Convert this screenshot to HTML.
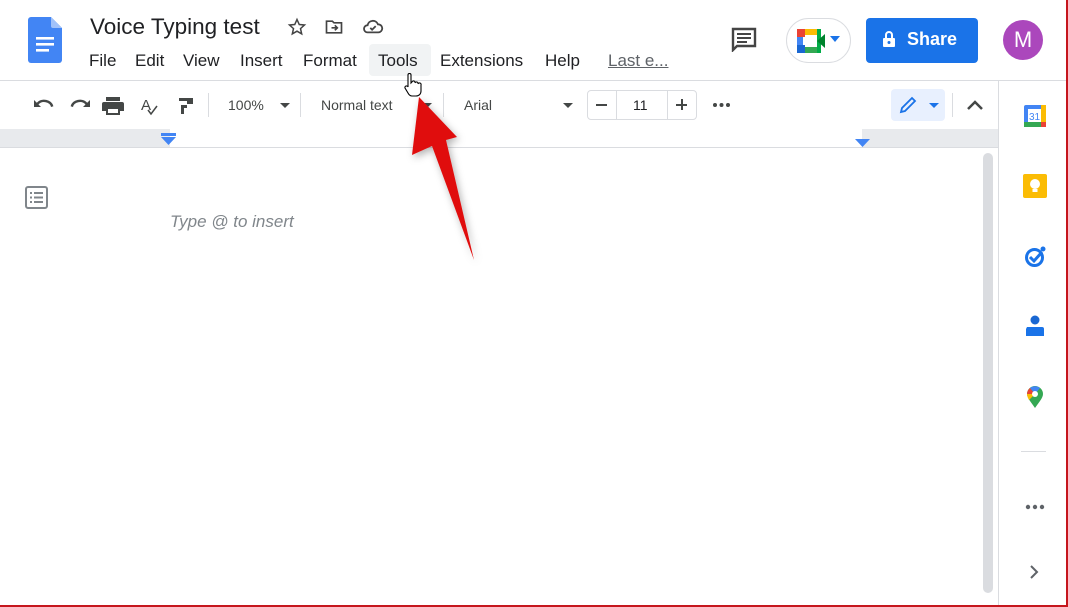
<!DOCTYPE html>
<html><head><meta charset="utf-8"><style>
*{margin:0;padding:0;box-sizing:border-box}
body{width:1068px;height:607px;position:relative;overflow:hidden;background:#fff;font-family:"Liberation Sans",Arial,sans-serif;color:#202124}
.a{position:absolute}
.menu span{position:absolute;top:51px;font-size:17px;color:#202124}
.tb{color:#444746;font-size:14px}
</style></head><body>
<svg class="a" style="left:28px;top:17px" width="34" height="46" viewBox="0 0 34 46"><path d="M3 0h20l11 11v32a3 3 0 0 1-3 3H3a3 3 0 0 1-3-3V3a3 3 0 0 1 3-3z" fill="#4285f4"/><path d="M23 0l11 11H25a2 2 0 0 1-2-2z" fill="#a1c2fa"/><rect x="8" y="20" width="18" height="2.6" fill="#fff"/><rect x="8" y="26" width="18" height="2.6" fill="#fff"/><rect x="8" y="32" width="13" height="2.6" fill="#fff"/></svg>
<div class="a" style="left:90px;top:14px;font-size:22.5px">Voice Typing test</div>
<svg class="a" style="left:287px;top:17px" width="20" height="20" viewBox="0 0 24 24"><path d="M12 3l2.7 6 6.3.6-4.8 4.3 1.4 6.4L12 17l-5.6 3.3 1.4-6.4L3 9.6 9.3 9z" fill="none" stroke="#444" stroke-width="1.8"/></svg>
<svg class="a" style="left:324px;top:17px" width="20" height="20" viewBox="0 0 24 24"><path d="M3 5h7l2 2h9v12H3z" fill="none" stroke="#444" stroke-width="2"/><path d="M9 13h7M13 10l3 3-3 3" stroke="#444" stroke-width="2" fill="none"/></svg>
<svg class="a" style="left:362px;top:18px" width="22" height="18" viewBox="0 0 24 20"><path d="M6 16a4 4 0 0 1 0-8 6 6 0 0 1 11.5-1A4.5 4.5 0 0 1 18 16z" fill="none" stroke="#444" stroke-width="2"/><path d="M9 11l2 2 4-4" stroke="#444" stroke-width="2" fill="none"/></svg>
<div class="a" style="left:369px;top:44px;width:62px;height:32px;background:#f1f3f4;border-radius:4px"></div>
<div class="menu"><span style="left:89px">File</span><span style="left:135px">Edit</span><span style="left:183px">View</span><span style="left:240px">Insert</span><span style="left:303px">Format</span><span style="left:378px">Tools</span><span style="left:440px">Extensions</span><span style="left:545px">Help</span><span style="left:608px;color:#5f6368;text-decoration:underline">Last e...</span></div>
<svg class="a" style="left:731px;top:27px" width="26" height="25" viewBox="0 0 26 25"><path d="M2 2h22v17H6l-4 4z" fill="none" stroke="#444" stroke-width="2.4"/><path d="M6 7h14M6 11h14M6 15h10" stroke="#444" stroke-width="2"/></svg>
<div class="a" style="left:786px;top:18px;width:65px;height:45px;border:1px solid #dadce0;border-radius:23px"></div>
<svg class="a" style="left:797px;top:29px" width="36" height="24" viewBox="0 0 36 24"><rect x="0" y="0" width="8" height="8" fill="#ea4335"/><rect x="8" y="0" width="12" height="6" fill="#fbbc04"/><rect x="0" y="8" width="6" height="8" fill="#4285f4"/><rect x="0" y="16" width="8" height="8" fill="#1967d2"/><rect x="8" y="18" width="12" height="6" fill="#34a853"/><rect x="20" y="0" width="4" height="24" fill="#00ac47"/><path d="M20 12l8-7v14z" fill="#00832d"/><rect x="8" y="6" width="10" height="12" fill="#fff"/></svg>
<svg class="a" style="left:830px;top:36px" width="10" height="6"><path d="M0 0h10L5 6z" fill="#1a73e8"/></svg>
<div class="a" style="left:866px;top:18px;width:112px;height:45px;background:#1a73e8;border-radius:4px;color:#fff;font-size:18px;font-weight:bold;line-height:43px;padding-left:41px">Share</div>
<svg class="a" style="left:883px;top:31px" width="12" height="16" viewBox="0 0 12 16"><path d="M3 7V4a3 3 0 0 1 6 0v3" fill="none" stroke="#fff" stroke-width="2"/><rect x="0" y="7" width="12" height="9" rx="1" fill="#fff"/><circle cx="6" cy="11.5" r="1.5" fill="#1a73e8"/></svg>
<div class="a" style="left:1003px;top:20px;width:40px;height:40px;border-radius:50%;background:#ab47bc;color:#fff;font-size:22px;text-align:center;line-height:40px">M</div>
<div class="a" style="left:0;top:80px;width:1068px;height:1px;background:#dadce0"></div>
<svg class="a" style="left:33px;top:96px" width="170" height="20" viewBox="0 0 170 20"><g fill="#444746"><path d="M1 4v7h7L5.5 8.5A7 6 0 0 1 18 11l2.4-.8A9.5 8.5 0 0 0 3.8 6.8z"/><path d="M57 4v7h-7l2.5-2.5A7 6 0 0 0 40 11l-2.4-.8A9.5 8.5 0 0 1 54.2 6.8z"/><path d="M71 6h18a2 2 0 0 1 2 2v7h-4v4H73v-4h-4V8a2 2 0 0 1 2-2zM73 1h14v4H73zM75 13v4h10v-4z"/><path d="M146 2h14v6h-6v4h-3v6h-3v-9h6V5h-8z"/></g><text x="108" y="14" font-size="15" fill="#444746" font-family="Liberation Sans">A</text><path d="M115 14l3 4 6-8" stroke="#444746" stroke-width="1.5" fill="none"/></svg>
<div class="a" style="left:208px;top:93px;width:1px;height:24px;background:#dadce0"></div>
<div class="a tb" style="left:228px;top:97px">100%</div>
<svg class="a" style="left:280px;top:103px" width="10" height="5"><path d="M0 0h10L5 5z" fill="#444746"/></svg>
<div class="a" style="left:300px;top:93px;width:1px;height:24px;background:#dadce0"></div>
<div class="a tb" style="left:321px;top:97px">Normal text</div>
<svg class="a" style="left:422px;top:103px" width="10" height="5"><path d="M0 0h10L5 5z" fill="#444746"/></svg>
<div class="a" style="left:443px;top:93px;width:1px;height:24px;background:#dadce0"></div>
<div class="a tb" style="left:464px;top:97px">Arial</div>
<svg class="a" style="left:563px;top:103px" width="10" height="5"><path d="M0 0h10L5 5z" fill="#444746"/></svg>
<div class="a" style="left:587px;top:90px;width:110px;height:30px;border:1px solid #dadce0;border-radius:4px"></div>
<div class="a" style="left:616px;top:90px;width:1px;height:30px;background:#dadce0"></div>
<div class="a" style="left:667px;top:90px;width:1px;height:30px;background:#dadce0"></div>
<div class="a" style="left:596px;top:104px;width:11px;height:2px;background:#444746"></div>
<div class="a tb" style="left:633px;top:97px;color:#202124">11</div>
<div class="a" style="left:676px;top:104px;width:11px;height:2px;background:#444746"></div>
<div class="a" style="left:681px;top:99px;width:2px;height:11px;background:#444746"></div>
<svg class="a" style="left:712px;top:102px" width="20" height="6"><circle cx="3" cy="3" r="2" fill="#444746"/><circle cx="9.5" cy="3" r="2" fill="#444746"/><circle cx="16" cy="3" r="2" fill="#444746"/></svg>
<div class="a" style="left:891px;top:89px;width:54px;height:32px;background:#e8f0fe;border-radius:4px"></div>
<svg class="a" style="left:899px;top:96px" width="18" height="18" viewBox="0 0 18 18"><path d="M2 16l1-4L13 2l3 3L6 15z" fill="none" stroke="#1a73e8" stroke-width="1.8"/></svg>
<svg class="a" style="left:929px;top:103px" width="10" height="5"><path d="M0 0h10L5 5z" fill="#1a73e8"/></svg>
<div class="a" style="left:952px;top:93px;width:1px;height:24px;background:#dadce0"></div>
<svg class="a" style="left:967px;top:100px" width="16" height="10"><path d="M1 9l7-7 7 7" stroke="#444746" stroke-width="2.5" fill="none"/></svg>
<div class="a" style="left:0;top:129px;width:998px;height:18px;background:#e8eaed"></div>
<div class="a" style="left:170px;top:129px;width:692px;height:18px;background:#fff"></div>
<div class="a" style="left:0;top:147px;width:998px;height:1px;background:#dadce0"></div>
<div class="a" style="left:161px;top:133px;width:15px;height:3px;background:#4285f4"></div>
<svg class="a" style="left:161px;top:137px" width="15" height="8"><path d="M0 0h15L7.5 8z" fill="#4285f4"/></svg>
<svg class="a" style="left:855px;top:139px" width="15" height="8"><path d="M0 0h15L7.5 8z" fill="#4285f4"/></svg>
<svg class="a" style="left:25px;top:186px" width="23" height="23" viewBox="0 0 23 23"><rect x="1" y="1" width="21" height="21" rx="2" fill="none" stroke="#80868b" stroke-width="2"/><g fill="#80868b"><rect x="5" y="6" width="2" height="2"/><rect x="9" y="6" width="9" height="2"/><rect x="5" y="10.5" width="2" height="2"/><rect x="9" y="10.5" width="9" height="2"/><rect x="5" y="15" width="2" height="2"/><rect x="9" y="15" width="9" height="2"/></g></svg>
<div class="a" style="left:170px;top:212px;font-size:17px;font-style:italic;color:#80868b">Type @ to insert</div>
<div class="a" style="left:983px;top:153px;width:10px;height:440px;background:#dadce0;border-radius:5px"></div>
<div class="a" style="left:998px;top:81px;width:1px;height:526px;background:#dadce0"></div>
<svg class="a" style="left:1024px;top:105px" width="22" height="22" viewBox="0 0 22 22"><rect width="22" height="22" rx="2" fill="#4285f4"/><rect x="0" y="17" width="22" height="5" fill="#34a853"/><rect x="17" y="0" width="5" height="22" fill="#fbbc04"/><rect x="17" y="17" width="5" height="5" fill="#ea4335"/><rect x="4" y="4" width="13" height="13" fill="#fff"/><text x="5" y="15" font-size="10" fill="#4285f4" font-family="Liberation Sans">31</text></svg>
<svg class="a" style="left:1023px;top:174px" width="24" height="24" viewBox="0 0 24 24"><rect width="24" height="24" rx="2" fill="#fbbc04"/><circle cx="12" cy="10" r="5" fill="#fff"/><rect x="9.5" y="15" width="5" height="3" fill="#fff"/></svg>
<svg class="a" style="left:1024px;top:246px" width="22" height="22" viewBox="0 0 22 22"><circle cx="10.5" cy="11.5" r="8" fill="none" stroke="#1a73e8" stroke-width="3"/><path d="M6 11l4 4 8-9" stroke="#1a73e8" stroke-width="3" fill="none"/><circle cx="19" cy="3" r="2.5" fill="#1a73e8"/></svg>
<svg class="a" style="left:1025px;top:315px" width="20" height="22" viewBox="0 0 20 22"><circle cx="10" cy="5" r="4.5" fill="#1967d2"/><path d="M2 12h15a2 2 0 0 1 2 2v7H1v-7z" fill="#1a73e8"/></svg>
<svg class="a" style="left:1027px;top:386px" width="16" height="22" viewBox="0 0 16 22"><path d="M8 22C4 16 0 12 0 8a8 8 0 0 1 16 0c0 4-4 8-8 14z" fill="#34a853"/><path d="M0 8a8 8 0 0 1 3-6l5 6z" fill="#ea4335"/><path d="M3 2a8 8 0 0 1 10 0L8 8z" fill="#4285f4"/><path d="M0 8h8l-6 6C1 12 0 10 0 8z" fill="#fbbc04"/><circle cx="8" cy="8" r="3" fill="#fff"/></svg>
<div class="a" style="left:1021px;top:451px;width:25px;height:1px;background:#dadce0"></div>
<svg class="a" style="left:1025px;top:504px" width="20" height="6"><circle cx="3" cy="3" r="2.2" fill="#5f6368"/><circle cx="10" cy="3" r="2.2" fill="#5f6368"/><circle cx="17" cy="3" r="2.2" fill="#5f6368"/></svg>
<svg class="a" style="left:1029px;top:565px" width="10" height="14"><path d="M2 1l6 6-6 6" stroke="#5f6368" stroke-width="2" fill="none"/></svg>
<div class="a" style="left:1066px;top:0;width:2px;height:607px;background:#c5161d"></div>
<div class="a" style="left:0;top:605px;width:1068px;height:2px;background:#c5161d"></div>
<svg class="a" style="left:403px;top:73px" width="20" height="24" viewBox="0 0 20 24"><path d="M5 2a1.5 1.5 0 0 1 3 0v8l1-1a1.5 1.5 0 0 1 3 1 1.5 1.5 0 0 1 3 1 1.5 1.5 0 0 1 3 1v6c0 3-2 5-5 5H9c-2 0-3-1-4-3l-3-5a1.5 1.5 0 0 1 3-1z" fill="#fff" stroke="#000" stroke-width="1.1"/></svg>
<svg class="a" style="left:0;top:0" width="1068" height="607"><defs><filter id="s" x="-50%" y="-50%" width="200%" height="200%"><feDropShadow dx="2" dy="3" stdDeviation="4" flood-opacity="0.3"/></filter></defs><path d="M419 97L457 137L446 140L474 260L432 146L412 155z" fill="#e01010" filter="url(#s)"/></svg>
</body></html>
